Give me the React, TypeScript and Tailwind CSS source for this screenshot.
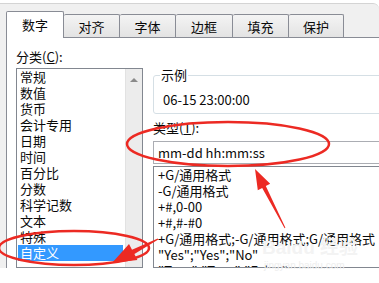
import React from "react";

const TABS = [
  { label: "数字", w: "w-[58px]", active: true },
  { label: "对齐", w: "w-[56px]", active: false },
  { label: "字体", w: "w-[56px]", active: false },
  { label: "边框", w: "w-[57px]", active: false },
  { label: "填充", w: "w-[56px]", active: false },
  { label: "保护", w: "w-[55px]", active: false },
];

const CATEGORIES = [
  "常规", "数值", "货币", "会计专用", "日期", "时间",
  "百分比", "分数", "科学记数", "文本", "特殊", "自定义",
];

const TYPES = [
  "+G/通用格式",
  "-G/通用格式",
  "+#,0-00",
  "+#,#-#0",
  "+G/通用格式;-G/通用格式;G/通用格式",
  '"Yes";"Yes";"No"',
  '"True";"True";"False"',
];

const Tab: React.FC<{ label: string; w: string; active: boolean }> = ({ label, w, active }) =>
  active ? (
    <div className={`${w} h-[27px] -mb-px relative z-10 bg-white border border-b-0 border-[#898c95] rounded-t-[2px] flex items-center justify-center`}>
      {label}
    </div>
  ) : (
    <div className={`${w} h-[23px] bg-gradient-to-b from-[#f4f4f4] to-[#e3e3e3] border border-l-0 border-b-0 border-[#898c95] rounded-t-[2px] flex items-center justify-center pt-px`}>
      {label}
    </div>
  );

export default function App() {
  return (
    <div className="relative w-[379px] h-[283px] bg-white overflow-hidden text-[13px] leading-[16px] text-[#0a0a0a] font-['Noto_Sans_CJK_SC',sans-serif]">
      <div className="mt-[3px] h-[265px] flex flex-col bg-[#f0f0f0] border-t border-[#d4d4d4] rounded-tr-[6px] overflow-hidden">
        {/* tab strip */}
        <div className="h-[33px] shrink-0 flex items-end pl-[6px]">
          {TABS.map((t) => (
            <Tab key={t.label} {...t} />
          ))}
        </div>

        {/* page */}
        <div className="flex-1 min-h-0 ml-[6px] w-[420px] bg-white border-l border-t border-[#898c95] flex gap-[10px] pl-[9px] pt-[11px]">
          {/* category */}
          <div className="w-[127px] shrink-0 flex flex-col">
            <div className="h-[16px]">
              分类(<span className="underline">C</span>):
            </div>
            <div className="mt-[3px] flex-1 border border-[#828790] flex">
              <div className="flex-1 pl-px">
                {CATEGORIES.map((c) => (
                  <div
                    key={c}
                    className={`w-[105px] h-[16px] pl-[2px] ${c === "自定义" ? "bg-[#3399ff] text-white" : ""}`}
                  >
                    {c}
                  </div>
                ))}
              </div>
              <div className="w-[17px] bg-[#ececec] border-l border-[#e2e2e2] flex justify-center pt-[9px]">
                <div className="w-0 h-0 border-l-[4px] border-r-[4px] border-b-[4px] border-l-transparent border-r-transparent border-b-[#8a8a8a]" />
              </div>
            </div>
          </div>

          {/* sample + type */}
          <div className="w-[270px] shrink-0 flex flex-col mt-[26px]">
            <div className="relative h-[39px] border border-[#d5dfe5] rounded-[3px] pl-[9px] pt-[16px]">
              <span className="absolute left-[6px] -top-[9px] bg-white px-px">示例</span>
              06-15 23:00:00
            </div>
            <div className="mt-[6px] h-[16px]">
              类型(<span className="underline">T</span>):
            </div>
            <div className="mt-[5px] h-[23px] border border-[#abadb3] flex items-center pl-[4px]">
              mm-dd hh:mm:ss
            </div>
            <div className="mt-[2px] flex-1 min-h-0 border border-[#828790] pl-[4px] overflow-hidden">
              {TYPES.map((t) => (
                <div key={t} className="h-[16px] whitespace-nowrap">
                  {t}
                </div>
              ))}
            </div>
          </div>
        </div>
      </div>

      {/* watermark */}
      <div className="absolute left-[262px] top-[238px] text-[19px] leading-[20px] font-bold text-[#f3f3f3] font-['Liberation_Sans','Noto_Sans_CJK_SC',sans-serif] whitespace-nowrap">
        Baidu 经验
      </div>
      <div className="absolute left-[264px] top-[260px] text-[10px] leading-[12px] text-[#eeeeee] font-['Liberation_Sans',sans-serif]">
        jingyan.baidu.com
      </div>

      {/* red annotations */}
      <svg className="absolute inset-0 pointer-events-none" width="379" height="283" viewBox="0 0 379 283">
        <ellipse cx="74" cy="248" rx="75" ry="17" fill="none" stroke="#ec2a23" strokeWidth="2.5" />
        <ellipse cx="228" cy="144" rx="101" ry="22" fill="none" stroke="#ec2a23" strokeWidth="2.5" />
        <polygon
          points="112,263 129,243.9 132,249.7 157.7,238.5 158.3,239.5 134.4,254.1 137.4,259.9"
          fill="#ec2a23"
        />
        <polygon
          points="255,169 270.2,183.8 265.8,186.1 285.4,227.8 284.6,228.2 262.2,187.9 257.8,190.2"
          fill="#ec2a23"
        />
      </svg>
    </div>
  );
}
